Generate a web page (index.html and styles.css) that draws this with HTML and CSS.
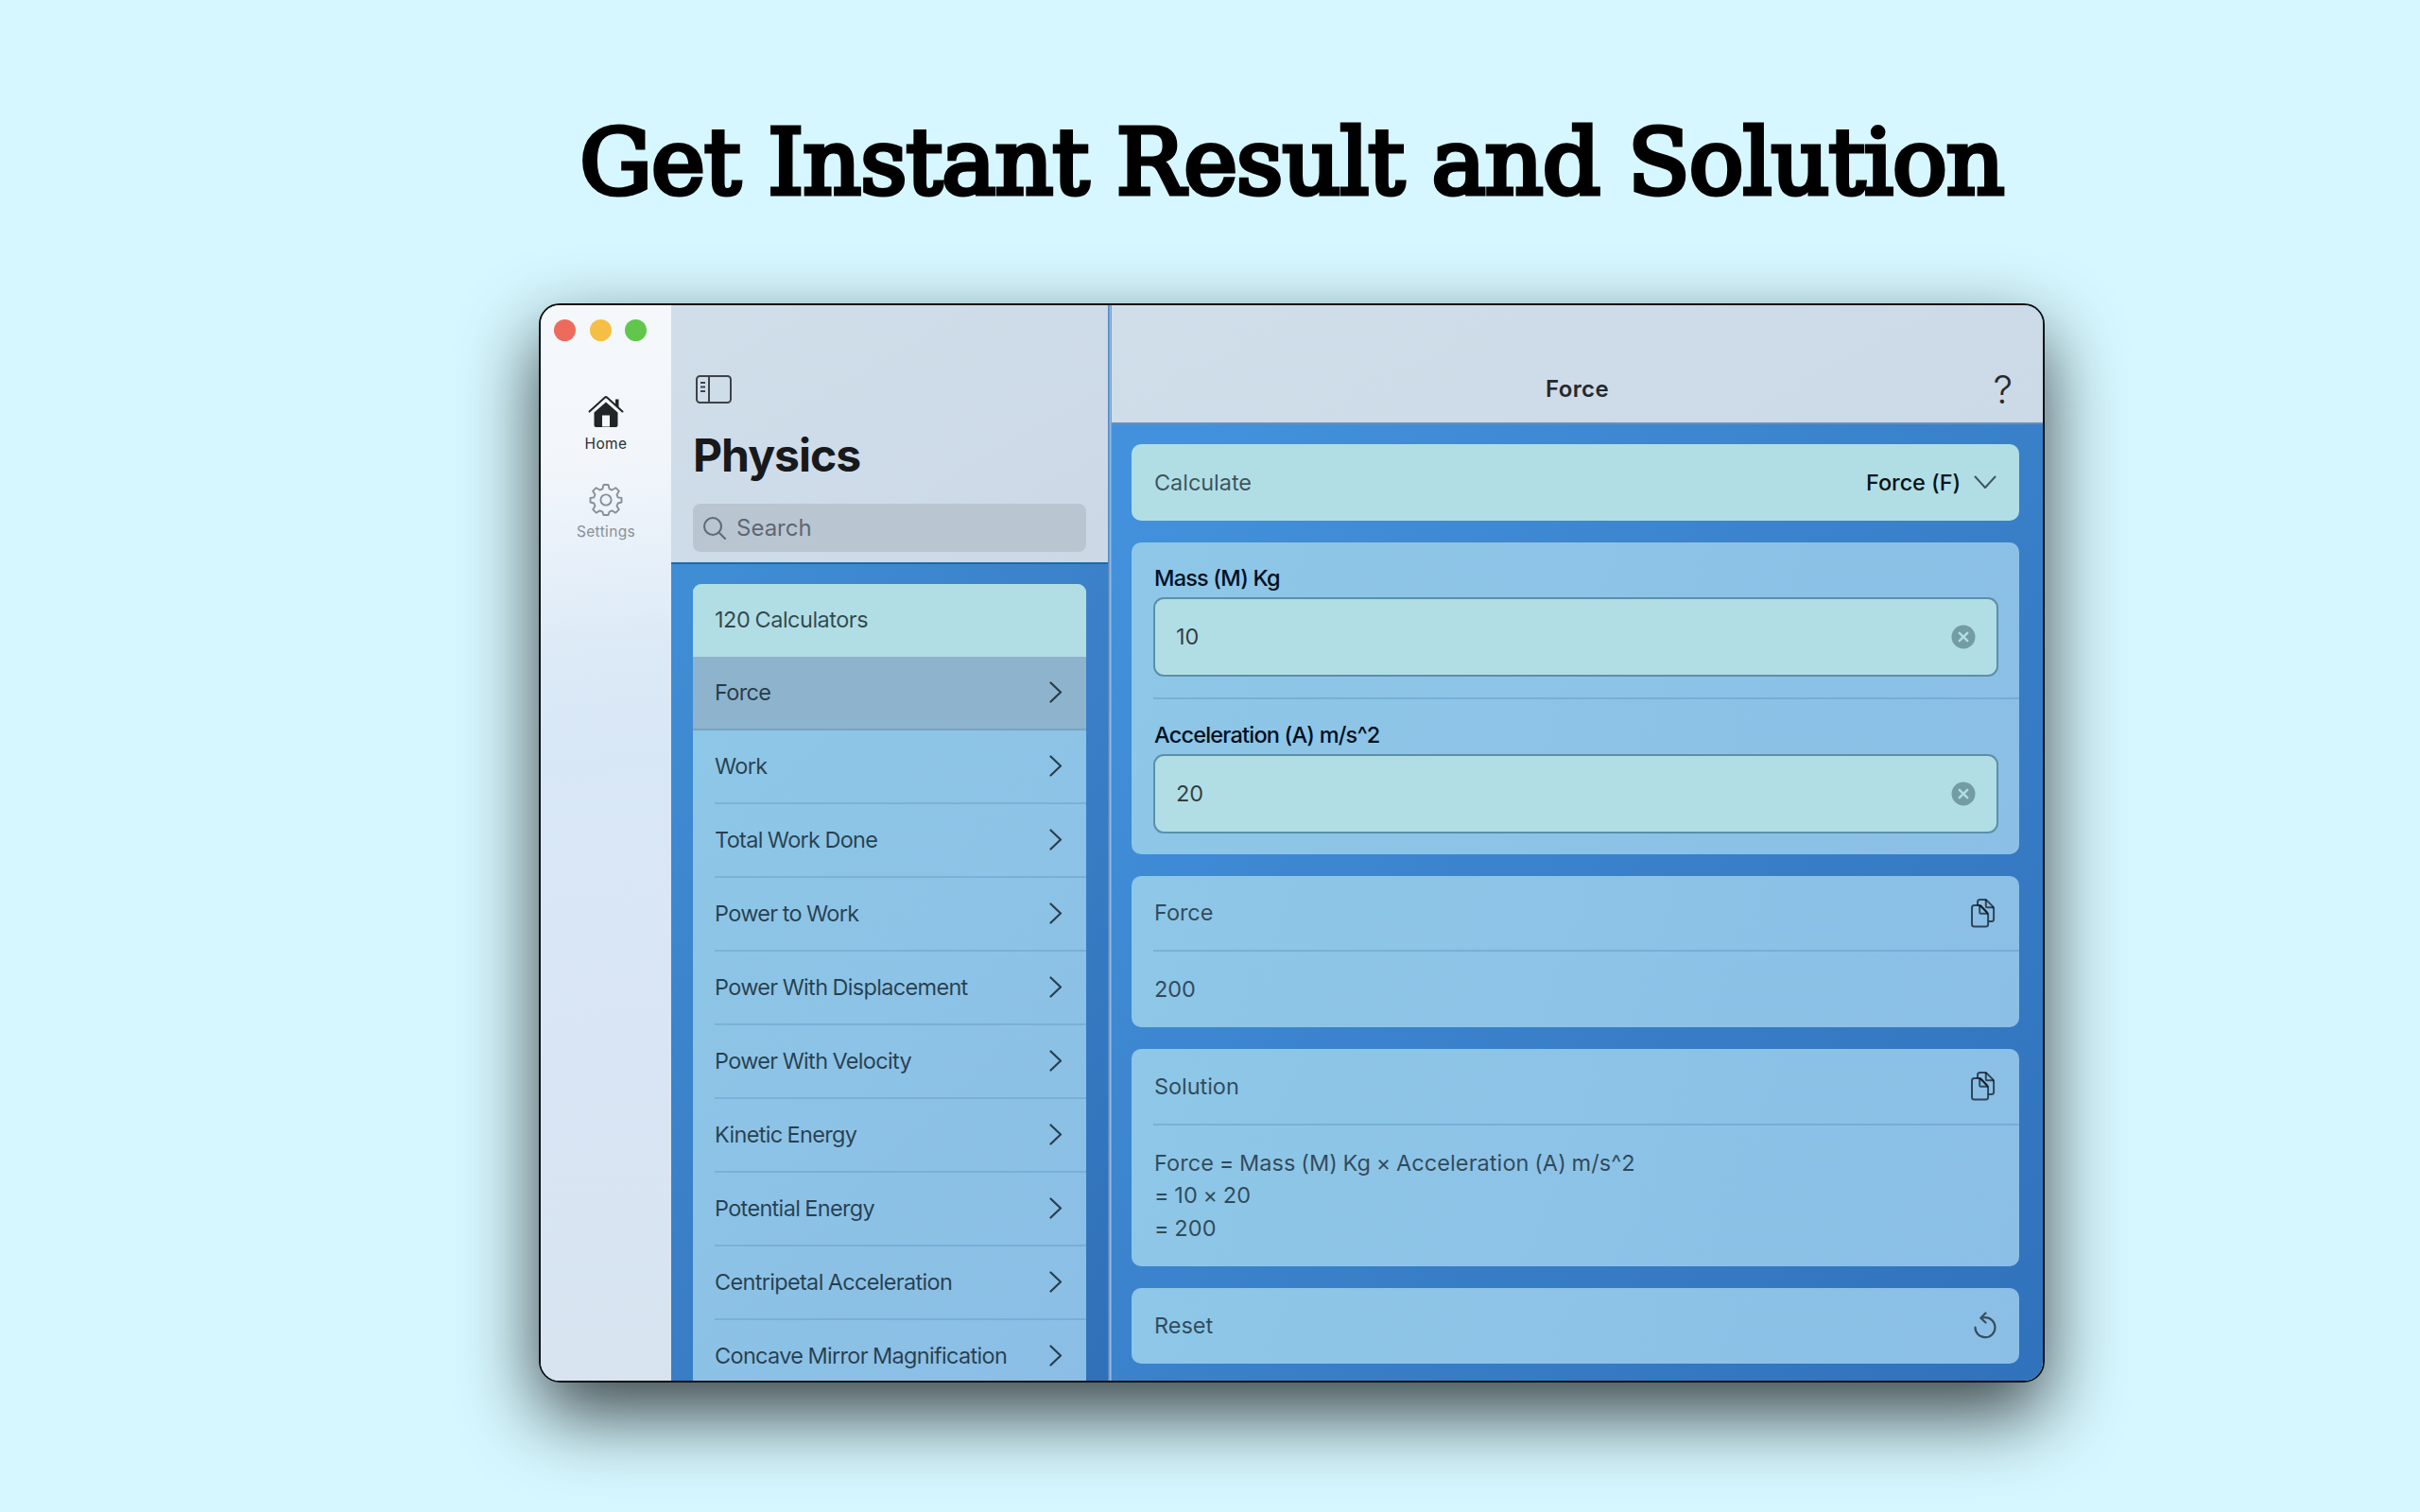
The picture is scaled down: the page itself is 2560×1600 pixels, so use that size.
FILE: index.html
```html
<!DOCTYPE html>
<html lang="en">
<head>
<meta charset="utf-8">
<title>Physics Calculators</title>
<link rel="stylesheet" href="styles.css">
</head>
<body>
<svg width="0" height="0" class="sprite" aria-hidden="true">
  <symbol id="chevron" viewBox="0 0 14 23"><path d="M1.5 1.5 12 11.5 1.5 21.5" fill="none" stroke="currentColor" stroke-width="2.2" stroke-linecap="round" stroke-linejoin="round"/></symbol>
  <symbol id="clear" viewBox="0 0 26 26"><circle cx="13" cy="13" r="12.5" fill="#749ca5"/><path d="M8.8 8.8l8.4 8.4M17.2 8.8l-8.4 8.4" stroke="#b1dee5" stroke-width="2.4" stroke-linecap="round"/></symbol>
  <symbol id="copy" viewBox="0 0 28 32"><g fill="none" stroke="currentColor" stroke-width="2" stroke-linejoin="round" stroke-linecap="round"><path d="M8 7.500V4.500a2.500 2.500 0 0 1 2.500-2.500H15.500c1 0 1.800.4 2.500 1.100l6 6c.7.700 1.100 1.500 1.100 2.500V22.500a2.500 2.500 0 0 1-2.500 2.500H20.500"/><path d="M4.500 8H9.500c.9 0 1.600.3 2.200.9l6.500 6.800c.6.600.9 1.300.9 2.200V28a2.500 2.500 0 0 1-2.500 2.500H4.500A2.500 2.500 0 0 1 2 28V10.500A2.500 2.500 0 0 1 4.500 8z"/><path d="M10.200 8.500V15.500a1.200 1.200 0 0 0 1.200 1.200H18.500"/><path d="M16.800 2.500V9a1.200 1.200 0 0 0 1.200 1.200H24.500M11 8.500 17.500 15"/></g></symbol>
</svg>

<h1 class="headline">Get Instant Result and Solution</h1>

<main class="window">
  <nav class="rail">
    <div class="lights"><i class="light red"></i><i class="light amber"></i><i class="light green"></i></div>
    <a class="tab active">
      <svg width="38" height="36" viewBox="0 0 38 36"><path d="M6.500 18.500 19 7.500 31.500 18.500V32a2 2 0 0 1-2 2H8.500a2 2 0 0 1-2-2z" fill="#222525"/><path d="M15 21.500h8V33.500h-8z" fill="#f4f7fb"/><path d="M1.500 17.500 17.700 2.700a2 2 0 0 1 2.600 0L36.500 17.500" fill="none" stroke="#222525" stroke-width="2" stroke-linecap="round"/><path d="M29 4.500h3.500v9L29 10.300z" fill="#222525"/></svg>
      <span>Home</span>
    </a>
    <a class="tab">
      <svg width="36" height="36" viewBox="0 0 36 36" fill="none" stroke="#8a8f96" stroke-width="1.900" stroke-linejoin="round"><path d="M15.500 2h5l1.100 4.300 2.900 1.200 3.800-2.300 3.500 3.500-2.300 3.800 1.200 2.900L34.500 16v4.500l-3.800 1-1.200 2.900 2.300 3.800-3.500 3.500-3.800-2.300-2.900 1.200L20.500 34h-5l-1.100-3.400-2.900-1.200-3.800 2.300-3.500-3.500 2.300-3.800-1.200-2.900L1.500 20.500V16l3.800-.6 1.200-2.900-2.300-3.800 3.500-3.500 3.800 2.300 2.900-1.200z"/><circle cx="18" cy="18" r="5.600"/></svg>
      <span>Settings</span>
    </a>
  </nav>

  <section class="browser">
    <header class="browser-head">
      <svg class="toggle" width="38" height="30" viewBox="0 0 38 30" fill="none" stroke="#3d4348" stroke-width="2"><rect x="1" y="1" width="36" height="28" rx="3.500"/><path d="M14 1v28M5 8h5M5 12.500h5M5 17h5"/></svg>
      <h2 class="title">Physics</h2>
      <div class="search">
        <svg width="26" height="26" viewBox="0 0 26 26" fill="none" stroke="#626c76" stroke-width="2.100" stroke-linecap="round"><circle cx="11" cy="11" r="9"/><path d="m17.800 17.800 6.200 6.200"/></svg>
        <span>Search</span>
      </div>
    </header>
    <div class="list">
      <div class="count">120 Calculators</div>
      <div class="item selected"><span>Force</span><svg><use href="#chevron"/></svg></div>
      <div class="item"><span>Work</span><svg><use href="#chevron"/></svg></div>
      <div class="item"><span>Total Work Done</span><svg><use href="#chevron"/></svg></div>
      <div class="item"><span>Power to Work</span><svg><use href="#chevron"/></svg></div>
      <div class="item"><span>Power With Displacement</span><svg><use href="#chevron"/></svg></div>
      <div class="item"><span>Power With Velocity</span><svg><use href="#chevron"/></svg></div>
      <div class="item"><span>Kinetic Energy</span><svg><use href="#chevron"/></svg></div>
      <div class="item"><span>Potential Energy</span><svg><use href="#chevron"/></svg></div>
      <div class="item"><span>Centripetal Acceleration</span><svg><use href="#chevron"/></svg></div>
      <div class="item"><span>Concave Mirror Magnification</span><svg><use href="#chevron"/></svg></div>
    </div>
  </section>

  <div class="divider"></div>

  <section class="detail">
    <header class="detail-head"><span></span><h3>Force</h3><span class="help">?</span></header>
    <div class="cards">
      <div class="card teal row">
        <span>Calculate</span>
        <span class="picker">Force (F)<svg width="24" height="15" viewBox="0 0 24 15"><path d="M1.500 1.500 12 13 22.500 1.500" fill="none" stroke="#3f5560" stroke-width="2" stroke-linecap="round" stroke-linejoin="round"/></svg></span>
      </div>
      <div class="card form">
        <div class="field"><label>Mass (M) Kg</label><div class="input"><span>10</span><svg width="26" height="26"><use href="#clear"/></svg></div></div>
        <div class="field"><label>Acceleration (A) m/s^2</label><div class="input"><span>20</span><svg width="26" height="26"><use href="#clear"/></svg></div></div>
      </div>
      <div class="card">
        <div class="row line"><span>Force</span><svg width="28" height="32"><use href="#copy"/></svg></div>
        <div class="row"><span>200</span></div>
      </div>
      <div class="card">
        <div class="row line tall"><span>Solution</span><svg width="28" height="32"><use href="#copy"/></svg></div>
        <div class="steps"><p>Force = Mass (M) Kg × Acceleration (A) m/s^2</p><p>= 10 × 20</p><p>= 200</p></div>
      </div>
      <div class="card row">
        <span>Reset</span>
        <svg class="reset" width="26" height="30" viewBox="0 0 26 30" fill="none" stroke="#374e5d" stroke-width="2.200" stroke-linecap="round" stroke-linejoin="round"><path d="M2.500 16.500a10.500 10.500 0 1 0 10.500-10.300c-1.200 0-2.200.1-3.200.3"/><path d="M13.500 1.500 8.300 6.700l5.200 4.800"/></svg>
      </div>
    </div>
  </section>
</main>
</body>
</html>
```
FILE: styles.css
```css
* { box-sizing: border-box; margin: 0; }

body {
  width: 2560px;
  height: 1600px;
  padding-left: 173px;
  display: flex;
  flex-direction: column;
  align-items: center;
  overflow: hidden;
  background: #d6f7ff;
  font-family: "Inter", "Liberation Sans", sans-serif;
  font-size: 23.5px;
}

svg { display: block; flex: none; }
.sprite { width: 0; height: 0; }

.headline {
  flex: none;
  height: 321px;
  padding-top: 12px;
  line-height: 321px;
  font-family: "DejaVu Serif", serif;
  font-size: 96px;
  font-weight: 400;
  letter-spacing: -.9px;
  -webkit-text-stroke: 5px #000;
  white-space: nowrap;
  color: #000;
}

.window {
  flex: none;
  display: flex;
  width: 1593px;
  height: 1142px;
  border: 2px solid #0c1114;
  border-radius: 22px;
  overflow: hidden;
  box-shadow: 0 33px 80px rgba(0, 0, 0, .72);
}

/* Left tab rail */
.rail {
  flex: none;
  width: 138px;
  display: flex;
  flex-direction: column;
  align-items: center;
  background: linear-gradient(175deg, #f5f8fb 0, #f2f6fb 170px, #dceaf7 370px, #d8e7f6 480px, #d9e5f4 800px, #d7e4f0 100%);
}
.lights { align-self: flex-start; display: flex; gap: 14.500px; padding: 15px 0 0 14px; height: 95px; }
.light { width: 23px; height: 23px; border-radius: 50%; }
.red { background: #ed6b5c; }
.amber { background: #f5bf45; }
.green { background: #61c64c; }
.tab {
  display: flex;
  flex-direction: column;
  align-items: center;
  height: 94px;
  font-size: 15.500px;
  letter-spacing: .35px;
  line-height: 20px;
  color: #8b8f96;
}
.tab svg { margin-bottom: 6px; }
.active { color: #2c2f31; height: 93px; }

/* Calculator list */
.browser {
  flex: none;
  width: 462px;
  background: linear-gradient(125deg, #3f8dd4 20%, #3a80c8 55%, #3070b9 100%);
}
.browser-head {
  height: 274px;
  padding: 74px 23px 0;
  background: linear-gradient(150deg, #d0deea, #ccd8e6);
  border-bottom: 2px solid #1a6ba8;
}
.toggle { margin-left: 3px; }
.title {
  margin-top: 23px;
  line-height: 64px;
  font-size: 48px;
  font-weight: 700;
  letter-spacing: -1px;
  color: #17191b;
}
.search {
  display: flex;
  align-items: center;
  gap: 10px;
  height: 51px;
  margin-top: 19px;
  padding-left: 10px;
  border-radius: 8px;
  background: #bac5d2;
  font-size: 24px;
  color: #5e6872;
}
.list {
  margin: 21px 23px 0;
  border-radius: 9px 9px 0 0;
  overflow: hidden;
  background: linear-gradient(135deg, #8ec8e7, #8bbee5);
  letter-spacing: -.68px;
  word-spacing: -.8px;
  color: rgba(0, 12, 20, .72);
}
.count { height: 77px; line-height: 76px; padding-left: 23px; background: #b1dee5; letter-spacing: -.5px; }
.item {
  display: flex;
  align-items: center;
  justify-content: space-between;
  height: 78px;
  margin-left: 23px;
  padding: 0 25px 1px 0;
  border-bottom: 2px solid rgba(0, 60, 120, .13);
}
.item svg { width: 14px; height: 23px; }
.selected {
  margin-left: 0;
  padding-left: 23px;
  background: #8db3cd;
  border-bottom-color: rgba(80, 130, 165, .3);
}

.divider { flex: none; width: 4px; background: linear-gradient(90deg, #5688c0 0 1px, #6b9fd3 1px 2px, #94b9e2 2px 3px, #6fa3dc 3px 4px); }

/* Calculator detail */
.detail {
  flex: 1;
  background: linear-gradient(130deg, #4391dc 10%, #3a82cb 50%, #3072bb 100%);
}
.detail-head {
  display: grid;
  grid-template-columns: 1fr auto 1fr;
  align-items: center;
  height: 126px;
  padding: 53px 32px 0;
  border-bottom: 2px solid #6d8fb0;
  background: linear-gradient(150deg, #d0deea, #ccd9e7);
  color: #25292d;
}
.detail-head h3 { font-size: 24px; font-weight: 600; letter-spacing: .4px; }
.help { justify-self: end; font-size: 41px; font-weight: 300; line-height: 50px; }

.cards { display: flex; flex-direction: column; gap: 23px; padding: 21px 25px 0 21px; }
.card {
  border-radius: 10px;
  background: linear-gradient(110deg, #8ec7e7, #8bbfe6);
  color: rgba(0, 10, 18, .67);
}
.row {
  display: flex;
  align-items: center;
  justify-content: space-between;
  height: 80px;
  padding: 0 24px 0 24px;
  letter-spacing: -.05px;
}
.row.card { height: 80.500px; }
.teal { background: #b1dee5; }
.picker {
  display: flex;
  align-items: center;
  gap: 14px;
  font-weight: 500;
  color: #061419;
  letter-spacing: -.1px;
}
.line {
  margin-left: 23px;
  padding-left: 1px;
  border-bottom: 2px solid rgba(0, 60, 120, .15);
}
.tall { height: 81px; }
.reset { margin-right: -1px; }
.field { margin-left: 23px; padding: 19px 22px 22px 0; }
.field + .field { border-top: 2px solid rgba(0, 60, 120, .15); }
.field label {
  display: block;
  height: 39px;
  line-height: 37px;
  padding-left: 1px;
  font-weight: 500;
  letter-spacing: -.8px;
  color: #00101e;
}
.input {
  display: flex;
  align-items: center;
  justify-content: space-between;
  height: 84px;
  padding: 0 22px;
  border: 2px solid #5b90a8;
  border-radius: 11px;
  background: #b1dee5;
  color: rgba(0, 0, 0, .72);
}
.steps { padding: 23px 23px 22px 24px; line-height: 34.700px; letter-spacing: .08px; word-spacing: -1px; }
```
